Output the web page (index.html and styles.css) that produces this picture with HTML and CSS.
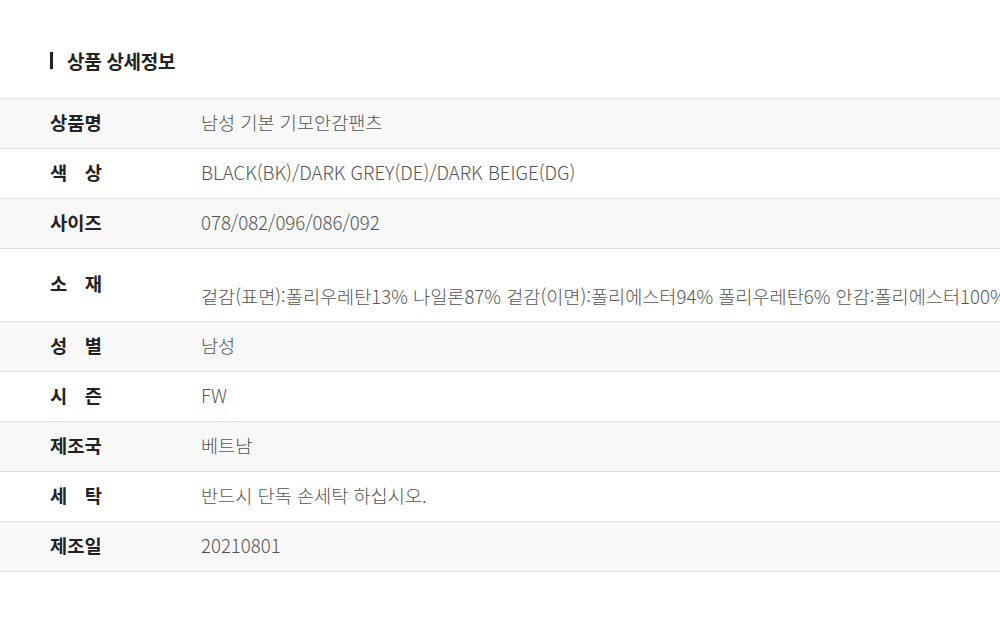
FILE: index.html
```html
<!DOCTYPE html>
<html lang="ko">
<head>
<meta charset="utf-8">
<link rel="stylesheet" href="styles.css">
</head>
<body>
<div class="page">
  <h2 class="title">상품 상세정보</h2>
  <div class="table">
    <div class="row alt"><div class="label">상품명</div><div class="value">남성 기본 기모안감팬츠</div></div>
    <div class="row"><div class="label spread"><span>색</span><span>상</span></div><div class="value">BLACK(BK)/DARK GREY(DE)/DARK BEIGE(DG)</div></div>
    <div class="row alt"><div class="label">사이즈</div><div class="value">078/082/096/086/092</div></div>
    <div class="row tall"><div class="label spread"><span>소</span><span>재</span></div><div class="value low">겉감(표면):폴리우레탄13% 나일론87% 겉감(이면):폴리에스터94% 폴리우레탄6% 안감:폴리에스터100%</div></div>
    <div class="row alt"><div class="label spread"><span>성</span><span>별</span></div><div class="value">남성</div></div>
    <div class="row"><div class="label spread"><span>시</span><span>즌</span></div><div class="value">FW</div></div>
    <div class="row alt"><div class="label">제조국</div><div class="value">베트남</div></div>
    <div class="row"><div class="label spread"><span>세</span><span>탁</span></div><div class="value">반드시 단독 손세탁 하십시오.</div></div>
    <div class="row alt"><div class="label">제조일</div><div class="value">20210801</div></div>
  </div>
</div>
</body>
</html>
```

FILE: styles.css
```css
html, body {
  margin: 0;
  padding: 0;
  background: #fff;
}
body {
  font-family: "Noto Sans CJK KR", "Noto Sans", sans-serif;
  overflow: hidden;
  width: 1000px;
}
.page {
  padding-top: 52px;
}
.title {
  margin: 0 0 29px 50px;
  padding-left: 14px;
  border-left: 3px solid #222;
  font-size: 19px;
  font-weight: 700;
  line-height: 17px;
  height: 17px;
  color: #222;
  letter-spacing: -0.3px;
  display: flex;
  align-items: center;
}
.table {
  border-top: 1px solid #ddd;
}
.row {
  box-sizing: border-box;
  display: flex;
  align-items: center;
  height: 50px;
  padding-bottom: 4px;
  border-bottom: 1px solid #ddd;
  background: #fff;
  overflow: hidden;
}
.row.alt {
  background: #f8f8f8;
}
.row.tall {
  height: 73px;
  padding-bottom: 0;
  align-items: flex-start;
}
.label {
  width: 52px;
  margin-left: 50px;
  flex: none;
  font-size: 18.7px;
  font-weight: 700;
  color: #222;
  letter-spacing: 0;
  white-space: nowrap;
}
.label.spread {
  display: flex;
  justify-content: space-between;
}
.tall .label {
  margin-top: 20px;
}
.value {
  margin-left: 99px;
  font-size: 18.6px;
  font-weight: 300;
  color: #555;
  letter-spacing: 0;
  white-space: nowrap;
}
.value.low {
  margin-top: 33px;
}
```
